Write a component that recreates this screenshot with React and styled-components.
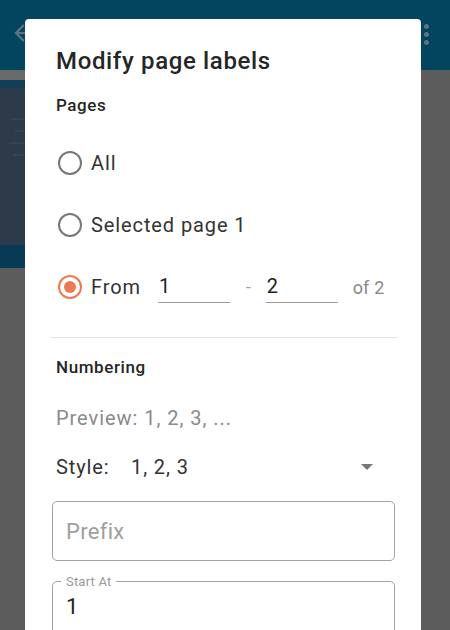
import React, { useState } from 'react';
import styled, { createGlobalStyle } from 'styled-components';

const GlobalStyle = createGlobalStyle`
  html, body { margin: 0; padding: 0; }
  body { font-family: Roboto, "Noto Sans", "Liberation Sans", sans-serif; }
`;

export default function App() {
  const [mode, setMode] = useState('range');
  const [from, setFrom] = useState('1');
  const [to, setTo] = useState('2');
  const [prefix, setPrefix] = useState('');
  const [start, setStart] = useState('1');

  return (
    <Screen>
      <GlobalStyle />
      <AppBar>
        <BackArrow viewBox="0 0 24 24">
          <path d="M20 11H7.83l5.59-5.59L12 4l-8 8 8 8 1.41-1.41L7.83 13H20v-2z" fill="#5f7280" />
        </BackArrow>
        <Kebab>
          <Dot />
          <Dot />
          <Dot />
        </Kebab>
      </AppBar>
      <Body>
        <Thumbs>
          <ThumbBand tone="#6a6a6a" h={10} />
          <ThumbBand tone="#123d56" h={8} />
          <ThumbPage>
            <ThumbLine w={14} />
            <ThumbLine w={10} />
            <ThumbLine w={16} />
            <ThumbLine w={12} />
          </ThumbPage>
          <ThumbBand tone="#073a55" h={23} />
        </Thumbs>
      </Body>

      <Dialog>
        <Title>Modify page labels</Title>
        <SectionLabel top={16}>Pages</SectionLabel>

        <RadioList>
          <RadioRow onClick={() => setMode('all')}>
            <Radio checked={mode === 'all'} />
            <RadioText>All</RadioText>
          </RadioRow>
          <RadioRow onClick={() => setMode('selected')}>
            <Radio checked={mode === 'selected'} />
            <RadioText>Selected page 1</RadioText>
          </RadioRow>
          <RadioRow onClick={() => setMode('range')}>
            <Radio checked={mode === 'range'} />
            <RadioText>From</RadioText>
            <PageInput gap={17} value={from} onChange={e => setFrom(e.target.value)} />
            <Dash>-</Dash>
            <PageInput value={to} onChange={e => setTo(e.target.value)} />
            <OfText>of 2</OfText>
          </RadioRow>
        </RadioList>

        <Divider />

        <SectionLabel top={17}>Numbering</SectionLabel>
        <Preview>Preview: 1, 2, 3, ...</Preview>
        <StyleRow>
          <StyleLabel>Style:</StyleLabel>
          <StyleValue>1, 2, 3</StyleValue>
          <Caret />
        </StyleRow>

        <Outlined>
          <OutlinedInput placeholder="Prefix" value={prefix} onChange={e => setPrefix(e.target.value)} />
        </Outlined>
        <Outlined as="fieldset" top={14}>
          <Legend>Start At</Legend>
          <OutlinedInput value={start} onChange={e => setStart(e.target.value)} />
        </Outlined>
      </Dialog>
    </Screen>
  );
}

const Screen = styled.div`
  position: relative;
  width: 450px;
  height: 630px;
  overflow: hidden;
  background: #5c5c5c;
  display: flex;
  flex-direction: column;
`;

const AppBar = styled.div`
  height: 70px;
  flex-shrink: 0;
  background: #03455f;
  display: flex;
  align-items: center;
  justify-content: space-between;
  padding: 0 21px 0 10px;
  box-sizing: border-box;
`;

const BackArrow = styled.svg`
  width: 26px;
  height: 26px;
  margin-top: -4px;
`;

const Kebab = styled.div`
  display: flex;
  flex-direction: column;
  gap: 3px;
  margin-top: -2px;
`;

const Dot = styled.span`
  width: 5px;
  height: 5px;
  border-radius: 50%;
  background: #5f7280;
`;

const Body = styled.div`
  flex: 1;
  display: flex;
`;

const Thumbs = styled.div`
  width: 25px;
  display: flex;
  flex-direction: column;
`;

const ThumbBand = styled.div`
  height: ${p => p.h}px;
  background: ${p => p.tone};
`;

const ThumbPage = styled.div`
  height: 157px;
  background: #2c3a49;
  display: flex;
  flex-direction: column;
  align-items: flex-end;
  gap: 10px;
  padding-top: 30px;
  box-sizing: border-box;
`;

const ThumbLine = styled.div`
  width: ${p => p.w}px;
  height: 2px;
  background: #364353;
`;

const Dialog = styled.div`
  position: absolute;
  left: 25px;
  top: 19px;
  width: 396px;
  height: 640px;
  background: #fff;
  border-radius: 4px;
  box-sizing: border-box;
  padding: 26px 24px 0;
  display: flex;
  flex-direction: column;
`;

const Title = styled.h2`
  margin: 0 0 0 7px;
  font-size: 24px;
  line-height: 32px;
  letter-spacing: 0.65px;
  font-weight: 500;
  color: #262626;
`;

const SectionLabel = styled.div`
  margin: ${p => p.top || 0}px 0 0 7px;
  font-size: 17px;
  line-height: 24px;
  letter-spacing: 0.6px;
  font-weight: 500;
  color: #262626;
`;

const RadioList = styled.div`
  margin-top: 15px;
  display: flex;
  flex-direction: column;
`;

const RadioRow = styled.label`
  display: flex;
  align-items: center;
  height: 62px;
  padding-left: 9px;
  cursor: pointer;
  white-space: nowrap;
`;

const Radio = styled.span`
  width: 24px;
  height: 24px;
  box-sizing: border-box;
  border-radius: 50%;
  border: 2px solid ${p => (p.checked ? '#ec7a53' : '#777')};
  display: flex;
  align-items: center;
  justify-content: center;
  flex-shrink: 0;
  &::after {
    content: '';
    width: 12px;
    height: 12px;
    border-radius: 50%;
    background: #ec7a53;
    display: ${p => (p.checked ? 'block' : 'none')};
  }
`;

const RadioText = styled.span`
  margin-left: 9px;
  font-size: 20px;
  letter-spacing: 0.9px;
  color: #333;
`;

const PageInput = styled.input`
  width: 72px;
  flex-shrink: 0;
  margin-left: ${p => p.gap || 0}px;
  border: none;
  border-bottom: 1px solid #9a9a9a;
  padding: 4px 0 5px 1px;
  font: 400 20px Roboto, sans-serif;
  letter-spacing: 0.5px;
  color: #222;
  outline: none;
  box-sizing: border-box;
  height: 31px;
`;

const Dash = styled.span`
  margin: 0 15px 0 16px;
  font-size: 17px;
  color: #999;
`;

const OfText = styled.span`
  margin-left: 15px;
  font-size: 18px;
  letter-spacing: 0.2px;
  color: #888;
`;

const Divider = styled.hr`
  margin: 19px 0 0 1px;
  border: none;
  border-top: 1px solid #e3e3e3;
  width: 347px;
`;

const Preview = styled.div`
  margin: 27px 0 0 7px;
  font-size: 20px;
  line-height: 24px;
  letter-spacing: 0.95px;
  color: #8a8a8a;
`;

const StyleRow = styled.div`
  display: flex;
  align-items: center;
  margin: 25px 0 0 7px;
  font-size: 20px;
  line-height: 24px;
  letter-spacing: 0.9px;
  color: #333;
`;

const StyleLabel = styled.span`
  width: 75px;
`;

const StyleValue = styled.span`
  flex: 1;
`;

const Caret = styled.span`
  width: 0;
  height: 0;
  border-left: 6px solid transparent;
  border-right: 6px solid transparent;
  border-top: 6px solid #777;
  margin-right: 24px;
`;

const Outlined = styled.div`
  margin: ${p => p.top || 22}px 2px 0 3px;
  height: 60px;
  border: 1px solid #a2a2a2;
  border-radius: 5px;
  box-sizing: border-box;
  padding: 0 13px;
  display: flex;
  align-items: center;
  min-width: 0;
  &:is(fieldset) {
    display: block;
    padding: 0 13px;
  }
`;

const Legend = styled.legend`
  padding: 0 5px;
  margin-left: -5px;
  font-size: 13px;
  line-height: 1;
  letter-spacing: 0.2px;
  color: #999;
`;

const OutlinedInput = styled.input`
  width: 100%;
  border: none;
  outline: none;
  padding: 0;
  font: 400 22px Roboto, sans-serif;
  letter-spacing: 0.3px;
  color: #222;
  background: transparent;
  &::placeholder {
    color: #9e9e9e;
  }
  fieldset & {
    margin-top: 6px;
  }
`;
